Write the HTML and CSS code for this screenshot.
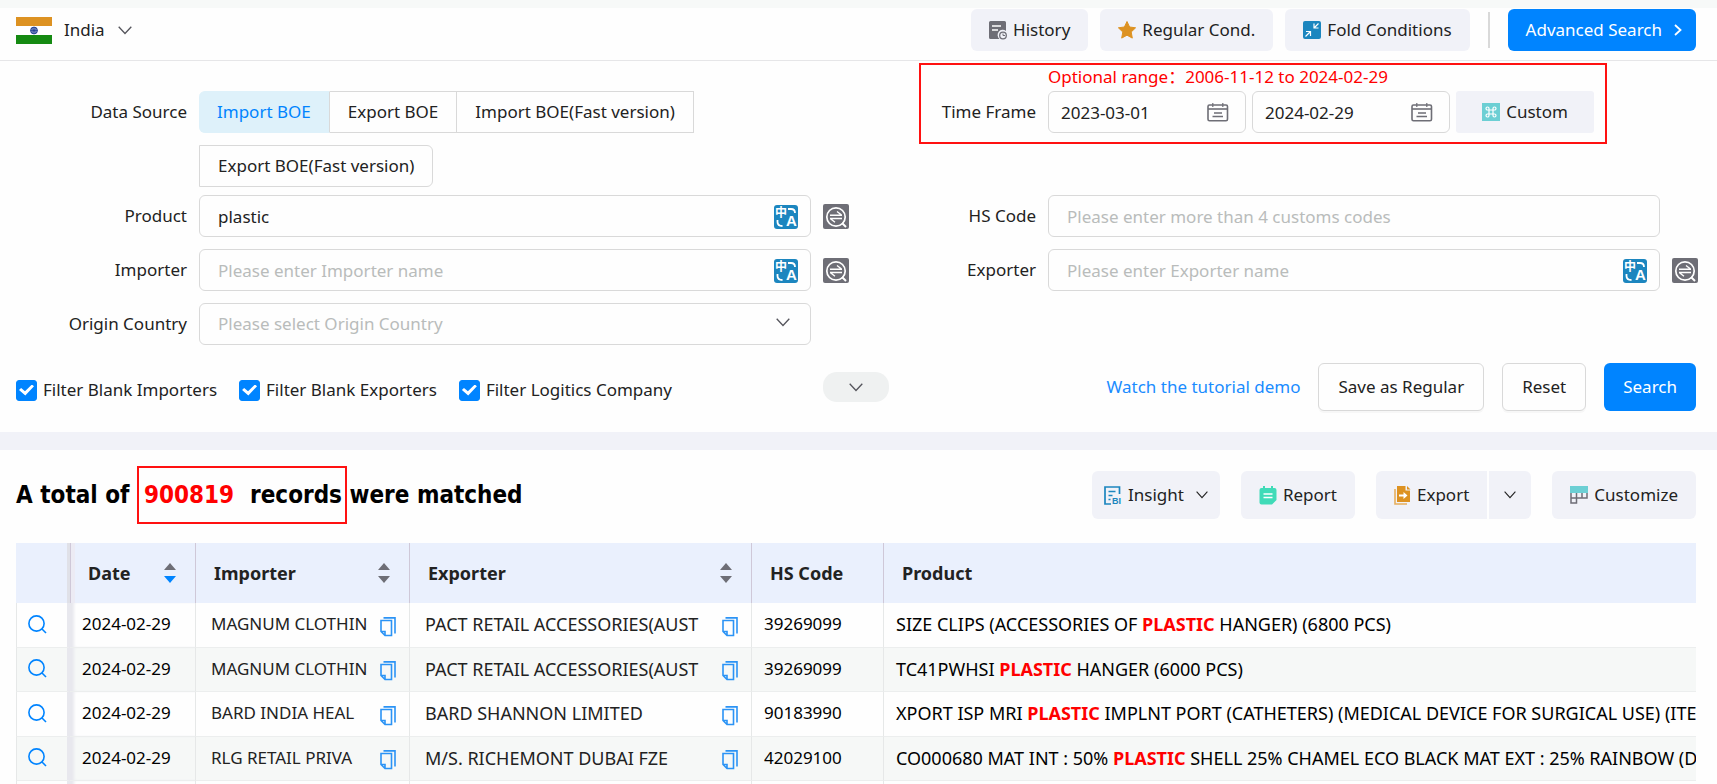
FILE: index.html
```html
<!DOCTYPE html>
<html lang="en">
<head>
<meta charset="utf-8">
<meta name="viewport" content="width=device-width, initial-scale=1">
<title>India Import Records</title>
<link rel="stylesheet" href="styles.css">
</head>
<body>
<svg class="sprite" aria-hidden="true">
  <symbol id="chevron" viewBox="0 0 14 9"><path d="M.7.7 7 7.5 13.300.7" fill="none" stroke="currentColor" stroke-width="1.300"/></symbol>
  <symbol id="exact" viewBox="0 0 26 25">
    <rect width="26" height="25" rx="2" fill="#6e6e76"/>
    <g fill="none" stroke="#fff"><circle cx="13" cy="13" r="9.200" stroke-width="1.700"/><path d="m19 19 4 4" stroke-width="2"/><path d="M7 11.200h12M14 7.500l4.500 3.500M19 14.500H7M12 18.200l-4.500-3.500" stroke-width="1.400"/></g>
  </symbol>
  <symbol id="calendar" viewBox="0 0 22 19">
    <g fill="none" stroke="#6e6e76"><rect x="1" y="2" width="19.500" height="15.800" rx="1.500" stroke-width="1.600"/><path d="M1 6h19.500" stroke-width="1.600"/><path d="M5.800 0v4M15.800 0v4" stroke-width="1.200"/><path d="M7 10h8M5.500 13.500h10.500" stroke-width="1.400"/></g>
  </symbol>
  <symbol id="magnify" viewBox="0 0 19 19"><g fill="none" stroke="#0084ff" stroke-width="1.600"><circle cx="8.500" cy="8.500" r="7.600"/><path d="m14 14 4 4"/></g></symbol>
  <symbol id="copy" viewBox="0 0 16 20"><g fill="none" stroke="#2b93f5" stroke-width="1.600"><path d="M1 3.500h10.500v15H5L1 14.500zM1 14.500h4v4"/><path d="M3.500.9H15v15.600" /></g></symbol>
  <symbol id="sort" viewBox="0 0 12 20"><path d="M0 7h12L6 0z" fill="#6e6e76"/><path class="down" d="M0 13h12l-6 7z"/></symbol>
</svg>

<header class="topbar">
  <div class="country">
    <svg class="flag" viewBox="0 0 36 27" role="img" aria-label="Flag of India"><path fill="#dd9222" d="M0 0h36v9H0z"/><path fill="#fff" d="M0 9h36v9H0z"/><path fill="#158a12" d="M0 18h36v9H0z"/><circle cx="18" cy="13.500" r="3.400" fill="#8d9ccb" stroke="#1f3f93"/><path d="M18 10v7M14.500 13.500h7M15.500 11l5 5M20.500 11l-5 5" stroke="#1f3f93" stroke-width=".8"/></svg>
    <select class="country-select" aria-label="Country"><option>India</option></select>
    <svg class="chevron"><use href="#chevron"/></svg>
  </div>
  <div class="top-actions">
    <button class="btn soft" type="button">
      <svg width="18" height="19" viewBox="0 0 18 19"><path d="M1.500 0h14A1.500 1.500 0 0 1 17 1.500V10a5 5 0 0 0-6.500 8H1.500A1.500 1.500 0 0 1 0 16.500v-15A1.500 1.500 0 0 1 1.500 0z" fill="#6e6e76"/><path d="M3 5h9M3 9h6" stroke="#fff" stroke-width="1.500"/><circle cx="14" cy="14.500" r="3.300" fill="#f1f2f8" stroke="#6e6e76" stroke-width="1.300"/><path d="M14 12.500v2h2" fill="none" stroke="#6e6e76"/></svg>
      History</button>
    <button class="btn soft" type="button">
      <svg width="18" height="18" viewBox="0 0 18 18"><path d="m9 .5 2.600 5.500 6 .8-4.400 4.200 1.100 6.100L9 14.200l-5.300 2.900 1.100-6.100L.4 6.800l6-.8z" fill="#dd9222" stroke="#dd9222" stroke-linejoin="round"/></svg>
      Regular Cond.</button>
    <button class="btn soft" type="button">
      <svg width="18" height="18" viewBox="0 0 18 18"><rect width="18" height="18" rx="2" fill="#1c86bf"/><path d="M15.500 2.500 11 7m0-4.500V7h4.500M2.500 15.500 7.500 10.500m-4.500 0h4.500V15" fill="none" stroke="#fff" stroke-width="1.200"/></svg>
      Fold Conditions</button>
    <span class="divider"></span>
    <button class="btn primary advanced" type="button">Advanced Search
      <svg class="arrow" width="8" height="12" viewBox="0 0 8 12"><path d="m1 1 5.500 5L1 11" fill="none" stroke="#fff" stroke-width="1.800"/></svg></button>
  </div>
</header>

<main>
<form class="search" id="search">
  <div class="field">
    <span class="label">Data Source</span>
    <div class="segments">
      <button class="segment active" type="button">Import BOE</button><button class="segment" type="button">Export BOE</button><button class="segment" type="button">Import BOE(Fast version)</button><button class="segment last" type="button">Export BOE(Fast version)</button>
    </div>
  </div>
  <div class="field">
    <label class="label" for="from">Time Frame</label>
    <div class="dates">
      <span class="date"><input class="input" id="from" type="text" value="2023-03-01"><svg width="22" height="19"><use href="#calendar"/></svg></span>
      <span class="date"><input class="input" type="text" value="2024-02-29" aria-label="Time Frame end"><svg width="22" height="19"><use href="#calendar"/></svg></span>
      <button class="btn soft custom" type="button">
        <svg width="18" height="18" viewBox="0 0 18 18"><path fill="#6ccfd4" d="M0 0h18v18H0z"/><path d="M7 7h4v4H7zM7 7H5.500A1.500 1.500 0 1 1 7 5.500zM11 7V5.500A1.500 1.500 0 1 1 12.500 7zM11 11h1.500a1.500 1.500 0 1 1-1.500 1.500zM7 11v1.500A1.500 1.500 0 1 1 5.500 11z" fill="none" stroke="#fff" stroke-width="1.200"/></svg>
        Custom</button>
      <p class="range">Optional range：2006-11-12 to 2024-02-29</p>
    </div>
    <span class="mark time-mark"></span>
  </div>

  <div class="field">
    <label class="label" for="product">Product</label>
    <span class="control"><input class="input" id="product" type="text" value="plastic"><svg class="translate" viewBox="0 0 24 24"><rect width="24" height="24" rx="3" fill="#1c86bf"/><text x="1" y="12" font-size="12" font-weight="700" fill="#fff" class="glyph">中</text><text x="12" y="21" font-size="15" font-weight="700" fill="#fff" class="glyph">A</text><path d="M14 4h3q4 0 4 4M3.500 15v2q0 4 5 4" fill="none" stroke="#fff" stroke-width="1.800"/></svg></span>
    <svg class="exact"><use href="#exact"/></svg>
  </div>
  <div class="field">
    <label class="label" for="hs">HS Code</label>
    <span class="control"><input class="input" id="hs" type="text" placeholder="Please enter more than 4 customs codes"></span>
  </div>

  <div class="field">
    <label class="label" for="importer">Importer</label>
    <span class="control"><input class="input" id="importer" type="text" placeholder="Please enter Importer name"><svg class="translate" viewBox="0 0 24 24"><rect width="24" height="24" rx="3" fill="#1c86bf"/><text x="1" y="12" font-size="12" font-weight="700" fill="#fff" class="glyph">中</text><text x="12" y="21" font-size="15" font-weight="700" fill="#fff" class="glyph">A</text><path d="M14 4h3q4 0 4 4M3.500 15v2q0 4 5 4" fill="none" stroke="#fff" stroke-width="1.800"/></svg></span>
    <svg class="exact"><use href="#exact"/></svg>
  </div>
  <div class="field">
    <label class="label" for="exporter">Exporter</label>
    <span class="control"><input class="input" id="exporter" type="text" placeholder="Please enter Exporter name"><svg class="translate" viewBox="0 0 24 24"><rect width="24" height="24" rx="3" fill="#1c86bf"/><text x="1" y="12" font-size="12" font-weight="700" fill="#fff" class="glyph">中</text><text x="12" y="21" font-size="15" font-weight="700" fill="#fff" class="glyph">A</text><path d="M14 4h3q4 0 4 4M3.500 15v2q0 4 5 4" fill="none" stroke="#fff" stroke-width="1.800"/></svg></span>
    <svg class="exact"><use href="#exact"/></svg>
  </div>

  <div class="field">
    <label class="label" for="origin">Origin Country</label>
    <span class="control"><select class="input empty" id="origin"><option>Please select Origin Country</option></select><svg class="chevron"><use href="#chevron"/></svg></span>
  </div>
</form>

<section class="submit">
  <div class="checks">
    <label class="check"><input type="checkbox" checked>Filter Blank Importers</label>
    <label class="check"><input type="checkbox" checked>Filter Blank Exporters</label>
    <label class="check"><input type="checkbox" checked>Filter Logitics Company</label>
  </div>
  <button class="more" type="button" aria-label="More conditions"><svg class="chevron"><use href="#chevron"/></svg></button>
  <div class="submit-actions">
    <a class="demo" href="#">Watch the tutorial demo</a>
    <button class="btn outline" type="button">Save as Regular</button>
    <button class="btn outline" type="reset" form="search">Reset</button>
    <button class="btn primary" type="submit" form="search">Search</button>
  </div>
</section>

<section class="results">
  <div class="results-head">
    <h1 class="total">A total of <span class="hit"><span class="count">900819</span>records<span class="mark"></span></span> were matched</h1>
    <div class="tools">
      <button class="btn soft insight" type="button">
        <svg width="18" height="19" viewBox="0 0 18 19"><path d="M7 18H1V1h14.500v7M4.500 5.500h7M4.500 9.500h4M4.500 13.500h2" fill="none" stroke="#1c86bf" stroke-width="1.700"/><text x="8" y="18" font-size="9" font-weight="700" fill="#1c86bf" class="glyph">BI</text></svg>
        Insight
        <svg class="small-chevron"><use href="#chevron"/></svg></button>
      <button class="btn soft" type="button">
        <svg width="18" height="19" viewBox="0 0 18 19"><path d="M2.500 2H4V0h2v2h6V0h2v2h1.500A2 2 0 0 1 17.500 4v10l-4.500 4.500H2.500A2 2 0 0 1 .5 16.500V4A2 2 0 0 1 2.500 2z" fill="#40dbb8"/><path d="M4.500 8h9M4.500 11.500h9" stroke="#fff" stroke-width="1.500"/></svg>
        Report</button>
      <div class="split">
        <button class="btn soft" type="button">
          <svg width="17" height="19" viewBox="0 0 17 19"><path d="M1 3v15h12" fill="none" stroke="#e6ae5c" stroke-width="1.600"/><path d="M3 0h8.500v4.500H16V16H3z" fill="#dd9222"/><path d="m13 0 3.500 3.500H13z" fill="#dd9222"/><path d="M5 8.500h4.500V6l4 3.500-4 3.500v-2.500H5z" fill="#fff"/></svg>
          Export</button>
        <button class="btn soft toggle" type="button" aria-label="Export options"><svg class="small-chevron"><use href="#chevron"/></svg></button>
      </div>
      <button class="btn soft" type="button">
        <svg width="18" height="18" viewBox="0 0 18 18"><path d="M1 7v10h5.500V7M1 12h16V7M12 7v5" fill="none" stroke="#6e6e76" stroke-width="1.500"/><path fill="#6ccfd4" d="M0 0h18v7H0z"/></svg>
        Customize</button>
    </div>
  </div>

  <table class="records">
    <colgroup><col class="c-view"><col class="c-date"><col class="c-importer"><col class="c-exporter"><col class="c-hs"><col></colgroup>
    <thead>
      <tr>
        <th aria-label="View"></th>
        <th><div class="th">Date<svg class="sort desc"><use href="#sort"/></svg></div></th>
        <th><div class="th">Importer<svg class="sort"><use href="#sort"/></svg></div></th>
        <th><div class="th">Exporter<svg class="sort"><use href="#sort"/></svg></div></th>
        <th><div class="th">HS Code</div></th>
        <th><div class="th">Product</div></th>
      </tr>
    </thead>
    <tbody>
      <tr>
        <td><svg class="magnify"><use href="#magnify"/></svg></td><td>2024-02-29</td>
        <td><div class="name">MAGNUM CLOTHIN<svg class="copy"><use href="#copy"/></svg></div></td>
        <td class="large"><div class="name">PACT RETAIL ACCESSORIES(AUST<svg class="copy"><use href="#copy"/></svg></div></td>
        <td>39269099</td><td class="large">SIZE CLIPS (ACCESSORIES OF <b>PLASTIC</b> HANGER) (6800 PCS)</td>
      </tr>
      <tr>
        <td><svg class="magnify"><use href="#magnify"/></svg></td><td>2024-02-29</td>
        <td><div class="name">MAGNUM CLOTHIN<svg class="copy"><use href="#copy"/></svg></div></td>
        <td class="large"><div class="name">PACT RETAIL ACCESSORIES(AUST<svg class="copy"><use href="#copy"/></svg></div></td>
        <td>39269099</td><td class="large">TC41PWHSI <b>PLASTIC</b> HANGER (6000 PCS)</td>
      </tr>
      <tr>
        <td><svg class="magnify"><use href="#magnify"/></svg></td><td>2024-02-29</td>
        <td><div class="name">BARD INDIA HEAL<svg class="copy"><use href="#copy"/></svg></div></td>
        <td class="large"><div class="name">BARD SHANNON LIMITED<svg class="copy"><use href="#copy"/></svg></div></td>
        <td>90183990</td><td class="large">XPORT ISP MRI <b>PLASTIC</b> IMPLNT PORT (CATHETERS) (MEDICAL DEVICE FOR SURGICAL USE) (ITE</td>
      </tr>
      <tr>
        <td><svg class="magnify"><use href="#magnify"/></svg></td><td>2024-02-29</td>
        <td><div class="name">RLG RETAIL PRIVA<svg class="copy"><use href="#copy"/></svg></div></td>
        <td class="large"><div class="name">M/S. RICHEMONT DUBAI FZE<svg class="copy"><use href="#copy"/></svg></div></td>
        <td>42029100</td><td class="large">CO000680 MAT INT : 50% <b>PLASTIC</b> SHELL 25% CHAMEL ECO BLACK MAT EXT : 25% RAINBOW (D</td>
      </tr>
      <tr><td></td><td></td><td></td><td></td><td></td><td></td></tr>
    </tbody>
  </table>
</section>
</main>
</body>
</html>
```
FILE: styles.css
```css
* { box-sizing: border-box; }

body {
  margin: 0;
  height: 100vh;
  overflow: hidden;
  background: #fefefe;
  color: #222;
  font-family: "Noto Sans", "Noto Sans CJK SC", sans-serif;
  font-size: 17px;
  line-height: 24px;
}

button, input, select { font: inherit; color: inherit; margin: 0; }
svg { flex: none; }
.sprite { position: absolute; width: 0; height: 0; }
.glyph { font-family: "Liberation Sans", "Noto Sans CJK SC", sans-serif; }
.chevron { width: 14px; height: 9px; color: #55555c; }
.small-chevron { width: 12px; height: 8px; color: #222; }

/* Buttons */
.btn {
  display: inline-flex;
  align-items: center;
  justify-content: center;
  gap: 6px;
  height: 42px;
  padding: 0 18px;
  border: 0;
  border-radius: 6px;
  white-space: nowrap;
}
.soft { background: #f1f2f8; }
.primary { background: #0084ff; color: #fff; }
.outline { background: #fefefe; border: 1px solid #d9d9d9; box-shadow: 0 2px 0 #f7f7f7; }

/* Top bar */
.topbar {
  display: flex;
  align-items: center;
  justify-content: space-between;
  height: 61px;
  padding: 0 21px 8px 16px;
  border-top: 8px solid #f7f9f8;
  border-bottom: 1px solid #e6e6e8;
}
.country { display: flex; align-items: center; }
.flag { width: 36px; height: 27px; }
.country-select { appearance: none; border: 0; background: none; width: 66px; padding: 0 0 0 12px; }
.top-actions { display: flex; align-items: center; gap: 12px; height: 42px; }
.divider { width: 2px; height: 36px; margin: 0 6px; background: #d9d9d9; }
.advanced { padding-right: 14px; }
.arrow { margin-left: 6px; }

/* Search form */
.search {
  display: grid;
  grid-template-columns: 1fr 1fr;
  row-gap: 12px;
  padding: 30px 19px 18px 0;
}
.field {
  position: relative;
  display: grid;
  grid-template-columns: 187px 1fr 26px;
  column-gap: 12px;
  align-items: start;
}
.label { line-height: 42px; text-align: right; }
.segments { display: flex; flex-wrap: wrap; row-gap: 12px; margin-bottom: -4px; }
.segment {
  height: 42px;
  padding: 0 18px;
  border: 1px solid #d9d9d9;
  border-left-width: 0;
  background: #fefefe;
  white-space: nowrap;
}
.segment.active { background: #def1fa; border-color: #def1fa #d9d9d9 #def1fa #def1fa; color: #0084ff; border-radius: 6px 0 0 6px; }
.segment.last { border-left-width: 1px; border-radius: 0 6px 6px 0; }

.control, .date { position: relative; display: block; }
.input {
  display: block;
  width: 100%;
  height: 42px;
  padding: 0 18px;
  border: 1px solid #d9d9d9;
  border-radius: 6px;
  background: #fefefe;
  appearance: none;
}
.input::placeholder, .empty { color: #b9bcbb; opacity: 1; }
.control .chevron { position: absolute; right: 21px; top: 15px; }
.translate { position: absolute; right: 13px; top: 10px; width: 24px; height: 24px; }
.exact { width: 26px; height: 25px; margin-top: 9px; }

.dates { position: relative; display: flex; gap: 6px; }
.date { width: 198px; }
.date .input { padding: 0 12px; }
.date svg { position: absolute; right: 17px; top: 12px; }
.custom { width: 138px; border-radius: 3px; }
.range { position: absolute; left: 0; bottom: 100%; margin: 0; color: #f00; line-height: 28px; white-space: nowrap; }
.mark { position: absolute; border: 2px solid #f11; pointer-events: none; }
.time-mark { left: 70px; right: 91px; top: -28px; height: 81px; }

/* Filters and actions */
.submit {
  display: grid;
  grid-template-columns: 807px 66px 1fr;
  align-items: center;
  padding: 0 21px 21px 16px;
  border-bottom: 18px solid #f1f2f8;
}
.checks { display: flex; gap: 22px; padding-top: 6px; }
.check { display: flex; align-items: center; gap: 6px; white-space: nowrap; }
.check input {
  appearance: none;
  display: grid;
  place-items: center;
  width: 21px;
  height: 21px;
  border: 1px solid #0084ff;
  border-radius: 3px;
}
.check input:checked { background: #0084ff; }
.check input:checked::before {
  content: "";
  width: 15px;
  height: 11px;
  background: #fff;
  clip-path: polygon(0 50%, 14% 32%, 40% 62%, 86% 0, 100% 16%, 42% 100%);
}
.more { display: flex; align-items: center; justify-content: center; height: 30px; border: 0; border-radius: 14px; background: #eff1f1; }
.submit-actions { display: flex; align-items: center; justify-content: flex-end; gap: 18px; }
.submit-actions .btn { height: 48px; padding: 0 19px; }
.demo { color: #1a8cff; text-decoration: none; }

/* Results */
.results { padding: 21px 21px 0 16px; }
.results-head { display: flex; align-items: center; justify-content: space-between; height: 48px; }
.total {
  margin: 0;
  color: #000;
  font-family: "DejaVu Sans Condensed", "Noto Sans", sans-serif;
  font-size: 24px;
  line-height: 32px;
  white-space: nowrap;
}
.hit { position: relative; margin-left: 7px; }
.hit .mark { left: -7px; right: -5px; top: -15px; bottom: -15px; }
.count { margin-right: 16px; color: #f00; }
.tools { display: flex; gap: 21px; }
.tools .btn { height: 48px; }
.tools .insight { padding: 0 12px; }
.insight .small-chevron { margin-left: 6px; }
.split { display: flex; gap: 2px; }
.split .btn:first-child { border-radius: 6px 0 0 6px; }
.split .toggle { width: 42px; padding: 0; border-radius: 0 6px 6px 0; }

.records { width: 100%; margin-top: 24px; table-layout: fixed; border-collapse: separate; border-spacing: 0; color: #000; }
.c-view { width: 54px; }
.c-date { width: 126px; }
.c-importer { width: 214px; }
.c-exporter { width: 342px; }
.c-hs { width: 132px; }
.records th {
  height: 60px;
  padding: 0 19px 0 18px;
  background: #eaf0fd;
  border-right: 1px solid #cfc8d8;
  color: #222;
  font-size: 18px;
  text-align: left;
}
.records th:last-child { border-right: 0; }
.th { display: flex; align-items: center; justify-content: space-between; }
.sort { width: 12px; height: 20px; fill: #6e6e76; }
.desc { fill: #0084ff; }
.records td {
  height: 44px;
  padding: 0 12px 2px;
  border-right: 1px solid #e6e8e8;
  border-bottom: 1px solid #eceeee;
  white-space: nowrap;
  overflow: hidden;
}
.records .large { font-size: 18px; }
.records tr:nth-child(odd) td { height: 45px; }
.records tr:nth-child(even) td { background: #f6f8f7; }
.records td:last-child { border-right: 0; padding-right: 0; }
.records td:first-child { padding-left: 11px; border-left: 1px solid #e6e8e8; border-right: 3px solid #e8e8ee; }
.records th:first-child { border-right: 3px solid #e0e1e8; }
.records td:nth-child(2) { box-shadow: inset 5px 0 3px -1px #e8e8ee; }
.records th:nth-child(2) { box-shadow: inset 1px 0 #cfc8d8, inset 5px 0 #ecebf4; }
.records b { color: #f00; }
.name { display: flex; align-items: center; justify-content: space-between; padding: 0 1px 0 3px; color: #222; }
.copy { width: 16px; height: 20px; margin-top: 5px; }
.magnify { display: block; width: 19px; height: 19px; }
```
